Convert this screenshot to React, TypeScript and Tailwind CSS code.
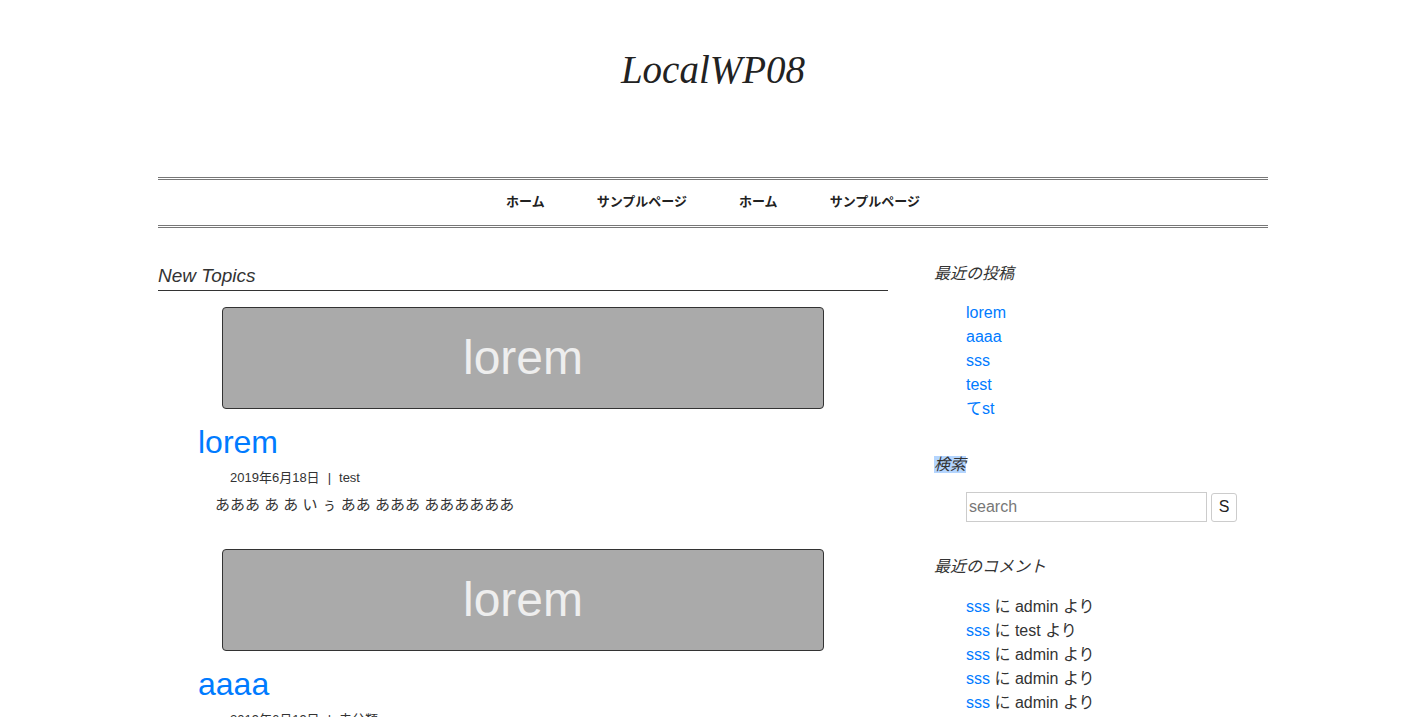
const NAV_LINKS = ["ホーム", "サンプルページ", "ホーム", "サンプルページ"];

const POSTS = [
  {
    title: "lorem",
    date: "2019年6月18日",
    cat: "test",
    excerpt: "あああ あ あ い ぅ ああ あああ ああああああ",
  },
  {
    title: "aaaa",
    date: "2019年6月19日",
    cat: "未分類",
    excerpt: "あああ",
  },
];

const RECENT = ["lorem", "aaaa", "sss", "test", "てst"];
const COMMENTS = ["admin", "test", "admin", "admin", "admin"];

const FONT =
  "font-['Liberation_Sans','Noto_Sans_CJK_JP',sans-serif]";

function PostCard({ post }: { post: (typeof POSTS)[number] }) {
  return (
    <article className="mb-[34px]">
      <div className="mx-auto flex h-[102px] w-[602px] items-center justify-center rounded-[4px] border border-[#333] bg-[#aaa]">
        <span className="text-[48px] leading-none text-[#eee]">lorem</span>
      </div>
      <h2 className="mt-[16px] pl-[40px] text-[32px] leading-[34px] text-[#007bff]">
        {post.title}
      </h2>
      <div className="mt-[10px] pl-[72px] text-[13px] leading-[18px] text-[#333]">
        {post.date}
        <span className="mx-[8px]">|</span>
        {post.cat}
      </div>
      <p className="mt-[8px] pl-[57px] text-[15px] leading-[20px] text-[#333]">
        {post.excerpt}
      </p>
    </article>
  );
}

function WidgetTitle({ children, selected }: { children: string; selected?: boolean }) {
  return (
    <h3 className="text-[16px] italic leading-[20px] text-[#333]">
      <span className={selected ? "bg-[#b4d5fe]" : ""}>{children}</span>
    </h3>
  );
}

export default function App() {
  return (
    <div className={`min-h-screen bg-white pl-[8px] ${FONT}`}>
      <div className="mx-auto w-[1110px]">
        <header className="flex h-[177px] items-start justify-center pt-[45px]">
          <h1 className="font-['Liberation_Serif',serif] text-[39px] italic leading-[50px] text-[#222]">
            LocalWP08
          </h1>
        </header>

        <nav className="flex h-[51px] items-center justify-center border-y-[3px] border-double border-[#777] pb-[1px]">
          {NAV_LINKS.map((label, i) => (
            <a
              key={i}
              className="px-[26px] text-[13px] font-bold text-[#222]"
            >
              {label}
            </a>
          ))}
        </nav>

        <div className="mt-[36px] flex">
          <main className="w-[730px]">
            <h2 className="border-b border-[#333] pb-[2px] text-[19px] italic leading-[24px] text-[#333]">
              New Topics
            </h2>
            <div className="mt-[16px]">
              {POSTS.map((post) => (
                <PostCard key={post.title} post={post} />
              ))}
            </div>
          </main>

          <aside className="ml-[46px] w-[334px]">
            <section>
              <WidgetTitle>最近の投稿</WidgetTitle>
              <ul className="mt-[17px] pl-[32px]">
                {RECENT.map((t) => (
                  <li key={t} className="text-[16px] leading-[24px] text-[#007bff]">
                    {t}
                  </li>
                ))}
              </ul>
            </section>

            <section className="mt-[34px]">
              <WidgetTitle selected>検索</WidgetTitle>
              <form className="mt-[17px] flex items-center gap-[4px] pl-[32px]">
                <input
                  placeholder="search"
                  className="h-[30px] w-[241px] border border-[#ccc] px-[2px] text-[16px] text-[#333] placeholder:text-[#777] focus:outline-none"
                />
                <button
                  type="button"
                  className="h-[29px] w-[26px] rounded-[3px] border border-[#ccc] bg-white text-[16px] text-[#222]"
                >
                  S
                </button>
              </form>
            </section>

            <section className="mt-[35px]">
              <WidgetTitle>最近のコメント</WidgetTitle>
              <ul className="mt-[18px] pl-[32px]">
                {COMMENTS.map((name, i) => (
                  <li key={i} className="text-[16px] leading-[24px] text-[#333]">
                    <span className="text-[#007bff]">sss</span> に {name} より
                  </li>
                ))}
              </ul>
            </section>
          </aside>
        </div>
      </div>
    </div>
  );
}
